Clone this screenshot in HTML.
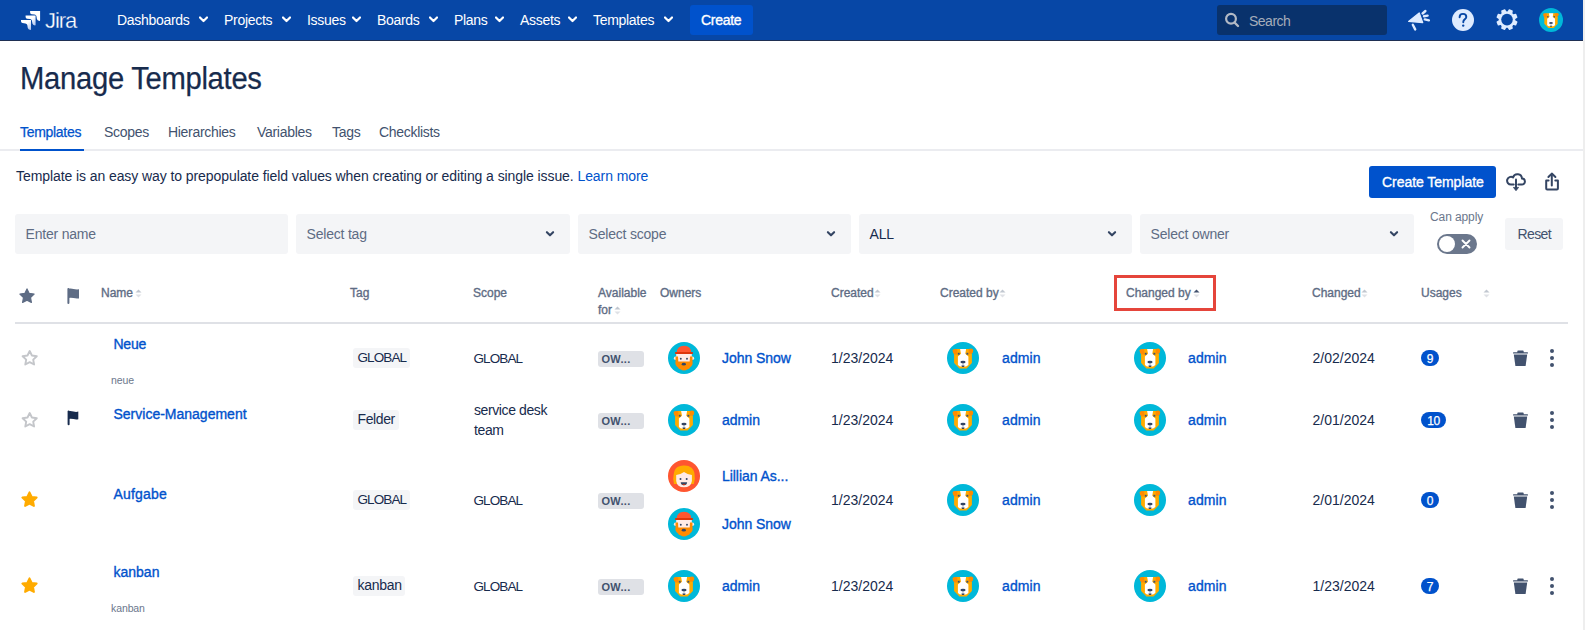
<!DOCTYPE html>
<html><head><meta charset="utf-8"><style>
html,body{margin:0;padding:0;background:#fff;width:1585px;height:630px;overflow:hidden;position:relative}
.t{position:absolute;white-space:nowrap;font-family:"Liberation Sans",sans-serif}
.r{position:absolute;display:block}
</style></head><body>
<div class="r" style="left:0px;top:0px;width:1583px;height:40px;background:#0747A6;border-radius:0px;"></div>
<div class="r" style="left:0px;top:40px;width:1583px;height:1px;background:#1F2F52;border-radius:0px;"></div>
<div class="r" style="left:1583px;top:0px;width:2px;height:630px;background:#EEEEEE;border-radius:0px;"></div>
<svg class="r" style="left:21px;top:6px" width="22" height="26" viewBox="0 0 22 26">
<defs><linearGradient id="lg" x1="0.2" y1="0.2" x2="1" y2="1"><stop offset="0.35" stop-color="#fff"/><stop offset="0.9" stop-color="#B4C8F0"/></linearGradient></defs>
<path id="wing" d="M0 0 H10 V9.2 Q10 10 9.3 9.9 Q7.2 9.6 6.8 8 L6.3 5 Q5.9 3.7 4.4 3.5 L1.5 3.1 Q0.1 2.8 0 1.3 Z" fill="#fff" transform="translate(9.1,5.1)"/>
<path d="M0 0 H10 V9.2 Q10 10 9.3 9.9 Q7.2 9.6 6.8 8 L6.3 5 Q5.9 3.7 4.4 3.5 L1.5 3.1 Q0.1 2.8 0 1.3 Z" fill="url(#lg)" transform="translate(4.6,9.6)"/>
<path d="M0 0 H10 V9.2 Q10 10 9.3 9.9 Q7.2 9.6 6.8 8 L6.3 5 Q5.9 3.7 4.4 3.5 L1.5 3.1 Q0.1 2.8 0 1.3 Z" fill="url(#lg)" transform="translate(0,14)"/>
</svg>
<div class="t" style="left:45px;top:10px;font-size:22px;line-height:22px;color:#FFFFFF;font-weight:400;letter-spacing:-1.1px;-webkit-text-stroke:0.3px #0747A6;">Jira</div>
<div class="t" style="left:117px;top:13px;font-size:14px;line-height:14px;color:#FFFFFF;font-weight:400;letter-spacing:-0.3px;">Dashboards</div>
<svg class="r" style="left:199px;top:16px" width="9" height="8" viewBox="0 0 9 8"><path d="M1 1.5 L4.5 5 L8 1.5" stroke="#fff" stroke-width="2.2" fill="none" stroke-linecap="round" stroke-linejoin="round"/></svg>
<div class="t" style="left:224px;top:13px;font-size:14px;line-height:14px;color:#FFFFFF;font-weight:400;letter-spacing:-0.3px;">Projects</div>
<svg class="r" style="left:282px;top:16px" width="9" height="8" viewBox="0 0 9 8"><path d="M1 1.5 L4.5 5 L8 1.5" stroke="#fff" stroke-width="2.2" fill="none" stroke-linecap="round" stroke-linejoin="round"/></svg>
<div class="t" style="left:307px;top:13px;font-size:14px;line-height:14px;color:#FFFFFF;font-weight:400;letter-spacing:-0.3px;">Issues</div>
<svg class="r" style="left:352px;top:16px" width="9" height="8" viewBox="0 0 9 8"><path d="M1 1.5 L4.5 5 L8 1.5" stroke="#fff" stroke-width="2.2" fill="none" stroke-linecap="round" stroke-linejoin="round"/></svg>
<div class="t" style="left:377px;top:13px;font-size:14px;line-height:14px;color:#FFFFFF;font-weight:400;letter-spacing:-0.3px;">Boards</div>
<svg class="r" style="left:429px;top:16px" width="9" height="8" viewBox="0 0 9 8"><path d="M1 1.5 L4.5 5 L8 1.5" stroke="#fff" stroke-width="2.2" fill="none" stroke-linecap="round" stroke-linejoin="round"/></svg>
<div class="t" style="left:454px;top:13px;font-size:14px;line-height:14px;color:#FFFFFF;font-weight:400;letter-spacing:-0.3px;">Plans</div>
<svg class="r" style="left:495px;top:16px" width="9" height="8" viewBox="0 0 9 8"><path d="M1 1.5 L4.5 5 L8 1.5" stroke="#fff" stroke-width="2.2" fill="none" stroke-linecap="round" stroke-linejoin="round"/></svg>
<div class="t" style="left:520px;top:13px;font-size:14px;line-height:14px;color:#FFFFFF;font-weight:400;letter-spacing:-0.3px;">Assets</div>
<svg class="r" style="left:568px;top:16px" width="9" height="8" viewBox="0 0 9 8"><path d="M1 1.5 L4.5 5 L8 1.5" stroke="#fff" stroke-width="2.2" fill="none" stroke-linecap="round" stroke-linejoin="round"/></svg>
<div class="t" style="left:593px;top:13px;font-size:14px;line-height:14px;color:#FFFFFF;font-weight:400;letter-spacing:-0.3px;">Templates</div>
<svg class="r" style="left:664px;top:16px" width="9" height="8" viewBox="0 0 9 8"><path d="M1 1.5 L4.5 5 L8 1.5" stroke="#fff" stroke-width="2.2" fill="none" stroke-linecap="round" stroke-linejoin="round"/></svg>
<div class="r" style="left:690px;top:5px;width:63px;height:30px;background:#0052CC;border-radius:3px;"></div>
<div class="t" style="left:701px;top:13px;font-size:14px;line-height:14px;color:#FFFFFF;font-weight:400;letter-spacing:-0.3px;-webkit-text-stroke:0.35px #FFFFFF;">Create</div>
<div class="r" style="left:1217px;top:5px;width:170px;height:30px;background:#09326C;border-radius:3px;"></div>
<svg class="r" style="left:1224px;top:12px" width="16" height="16" viewBox="0 0 16 16"><circle cx="7" cy="6.8" r="4.9" stroke="#B3BAC5" stroke-width="2.2" fill="none"/><path d="M10.5 10.5 L14 14" stroke="#B3BAC5" stroke-width="2.4" stroke-linecap="round"/></svg>
<div class="t" style="left:1249px;top:14px;font-size:14px;line-height:14px;color:#A5ADBA;font-weight:400;letter-spacing:-0.5px;">Search</div>
<svg class="r" style="left:1406px;top:9px" width="26" height="23" viewBox="0 0 26 23"><path d="M2.6 12.4 L13.2 3.9 L16.7 13.6 Z" fill="#DEEBFF" stroke="#DEEBFF" stroke-width="1.3" stroke-linejoin="round"/><path d="M6.8 15.8 L9.2 20.4" stroke="#DEEBFF" stroke-width="2.4" stroke-linecap="round"/><path d="M16.6 4.5 L19.4 2" stroke="#DEEBFF" stroke-width="2.4" stroke-linecap="round"/><path d="M18 7.3 L21.6 6.6" stroke="#DEEBFF" stroke-width="2.4" stroke-linecap="round"/><path d="M18.8 10.4 L22.9 11.3" stroke="#DEEBFF" stroke-width="2.4" stroke-linecap="round"/></svg>
<svg class="r" style="left:1451px;top:8px" width="24" height="24" viewBox="0 0 24 24"><circle cx="12" cy="12" r="11" fill="#DEEBFF"/><path d="M8.6 9.2 C8.6 7 10.2 5.9 12 5.9 C13.9 5.9 15.3 7.1 15.3 8.9 C15.3 11.2 12.3 11.4 12.3 13.8 V14.2" stroke="#0747A6" stroke-width="1.9" fill="none" stroke-linecap="round"/><circle cx="12.2" cy="17.6" r="1.2" fill="#0747A6"/></svg>
<svg class="r" style="left:1496px;top:9px" width="22" height="22" viewBox="0 0 22 22"><g transform="translate(11,10.6)"><path d="M-2.7 -7 L-2.1 -10.2 Q-2 -10.6 -1.6 -10.6 H1.6 Q2 -10.6 2.1 -10.2 L2.7 -7 Z" transform="rotate(22.5)" fill="#DEEBFF"/><path d="M-2.7 -7 L-2.1 -10.2 Q-2 -10.6 -1.6 -10.6 H1.6 Q2 -10.6 2.1 -10.2 L2.7 -7 Z" transform="rotate(67.5)" fill="#DEEBFF"/><path d="M-2.7 -7 L-2.1 -10.2 Q-2 -10.6 -1.6 -10.6 H1.6 Q2 -10.6 2.1 -10.2 L2.7 -7 Z" transform="rotate(112.5)" fill="#DEEBFF"/><path d="M-2.7 -7 L-2.1 -10.2 Q-2 -10.6 -1.6 -10.6 H1.6 Q2 -10.6 2.1 -10.2 L2.7 -7 Z" transform="rotate(157.5)" fill="#DEEBFF"/><path d="M-2.7 -7 L-2.1 -10.2 Q-2 -10.6 -1.6 -10.6 H1.6 Q2 -10.6 2.1 -10.2 L2.7 -7 Z" transform="rotate(202.5)" fill="#DEEBFF"/><path d="M-2.7 -7 L-2.1 -10.2 Q-2 -10.6 -1.6 -10.6 H1.6 Q2 -10.6 2.1 -10.2 L2.7 -7 Z" transform="rotate(247.5)" fill="#DEEBFF"/><path d="M-2.7 -7 L-2.1 -10.2 Q-2 -10.6 -1.6 -10.6 H1.6 Q2 -10.6 2.1 -10.2 L2.7 -7 Z" transform="rotate(292.5)" fill="#DEEBFF"/><path d="M-2.7 -7 L-2.1 -10.2 Q-2 -10.6 -1.6 -10.6 H1.6 Q2 -10.6 2.1 -10.2 L2.7 -7 Z" transform="rotate(337.5)" fill="#DEEBFF"/><circle r="8.2" fill="#DEEBFF"/><circle r="5.8" fill="#0747A6"/></g></svg>
<div class="r" style="left:1539px;top:8px;width:24px;height:24px"><svg width="24" height="24" viewBox="0 0 32 32"><circle cx="16" cy="16" r="16" fill="#00B8D9"/>
<path d="M7.1 12.3 L8.9 7.1 H22.6 L24.9 12.3 V20.9 L19.6 26.6 H12.4 L7.1 20.9 Z" fill="#FFAB00"/>
<path d="M5.6 8.6 Q5.8 6.9 7.6 6.9 L10.3 7.2 L10.3 12.6 L7.6 12.6 Q5.6 11.5 5.6 8.6 Z" fill="#FF8B00"/>
<path d="M26.2 8.4 Q26 6.6 24.2 6.6 L21.7 7 L21.7 11.8 L24.3 11.8 Q26.2 10.9 26.2 8.4 Z" fill="#FF8B00"/>
<path d="M13.1 7.1 H19.1 L18.3 11.7 L21.4 14.4 V23.1 L19.1 24.4 H12.9 L10.9 23.1 V14.4 L14 11.7 Z" fill="#FFFFFF"/>
<rect x="10.8" y="10.8" width="1.9" height="1.9" fill="#42526E"/><rect x="19.4" y="10.8" width="1.9" height="1.9" fill="#42526E"/>
<ellipse cx="16" cy="20.1" rx="2.6" ry="1.35" fill="#344563"/><rect x="15.6" y="21" width="0.8" height="2.8" fill="#97A0AF"/><path d="M14.4 23.6 H17.6 L17 24.9 H15 Z" fill="#344563"/>
</svg></div>
<div class="t" style="left:20px;top:63px;font-size:31px;line-height:31px;color:#172B4D;font-weight:400;letter-spacing:-0.3px;transform:scaleX(0.942);transform-origin:0 0;-webkit-text-stroke:0.25px #172B4D;">Manage Templates</div>
<div class="t" style="left:20px;top:125px;font-size:14px;line-height:14px;color:#0052CC;font-weight:400;letter-spacing:-0.3px;-webkit-text-stroke:0.25px #0052CC;">Templates</div>
<div class="t" style="left:104px;top:125px;font-size:14px;line-height:14px;color:#42526E;font-weight:400;letter-spacing:-0.3px;">Scopes</div>
<div class="t" style="left:168px;top:125px;font-size:14px;line-height:14px;color:#42526E;font-weight:400;letter-spacing:-0.3px;">Hierarchies</div>
<div class="t" style="left:257px;top:125px;font-size:14px;line-height:14px;color:#42526E;font-weight:400;letter-spacing:-0.3px;">Variables</div>
<div class="t" style="left:332px;top:125px;font-size:14px;line-height:14px;color:#42526E;font-weight:400;letter-spacing:-0.3px;">Tags</div>
<div class="t" style="left:379px;top:125px;font-size:14px;line-height:14px;color:#42526E;font-weight:400;letter-spacing:-0.3px;">Checklists</div>
<div class="r" style="left:0px;top:149px;width:1583px;height:2px;background:#EBECF0;border-radius:0px;"></div>
<div class="r" style="left:20px;top:149px;width:64px;height:2px;background:#0052CC;border-radius:0px;"></div>
<div class="t" style="left:16px;top:169px;font-size:14px;line-height:14px;color:#172B4D;font-weight:400;letter-spacing:-0.08px;">Template is an easy way to prepopulate field values when creating or editing a single issue. <span style="color:#0052CC">Learn more</span></div>
<div class="r" style="left:1369px;top:166px;width:127px;height:32px;background:#0052CC;border-radius:3px;"></div>
<div class="t" style="left:1382px;top:175px;font-size:14px;line-height:14px;color:#FFFFFF;font-weight:400;letter-spacing:-0.05px;-webkit-text-stroke:0.35px #FFFFFF;">Create Template</div>
<svg class="r" style="left:1504px;top:170px" width="24" height="24" viewBox="0 0 24 24"><path d="M9.7 14.6 H7 A3.9 3.9 0 1 1 9.07 7.39 A4.6 4.6 0 0 1 18 8.6 A3 3 0 0 1 17.8 14.6 H14.3" stroke="#344563" stroke-width="2" fill="none" stroke-linecap="round" stroke-linejoin="round"/><path d="M12 9.4 V18" stroke="#344563" stroke-width="2" stroke-linecap="round"/><path d="M9.4 17.4 H14.6 L12 20.7 Z" fill="#344563" stroke="#344563" stroke-width="0.8" stroke-linejoin="round"/></svg>
<svg class="r" style="left:1542px;top:170px" width="20" height="24" viewBox="0 0 20 24"><path d="M6.6 10.5 H4.2 V18.6 Q4.2 19.6 5.2 19.6 H14.9 Q15.9 19.6 15.9 18.6 V10.5 H13.3" stroke="#344563" stroke-width="2" fill="none" stroke-linecap="round" stroke-linejoin="round"/><path d="M9.8 4.5 V15.6" stroke="#344563" stroke-width="2" stroke-linecap="round"/><path d="M6.4 7 L9.8 3.6 L13.4 7" stroke="#344563" stroke-width="2" fill="none" stroke-linecap="round" stroke-linejoin="round"/></svg>
<div class="r" style="left:15px;top:214px;width:273px;height:40px;background:#F4F5F7;border-radius:3px;"></div>
<div class="t" style="left:25.5px;top:227px;font-size:14px;line-height:14px;color:#5E6C84;font-weight:400;letter-spacing:-0.2px;">Enter name</div>
<div class="r" style="left:296px;top:214px;width:274px;height:40px;background:#F4F5F7;border-radius:3px;"></div>
<div class="t" style="left:306.5px;top:227px;font-size:14px;line-height:14px;color:#5E6C84;font-weight:400;letter-spacing:-0.2px;">Select tag</div>
<svg class="r" style="left:545px;top:229px" width="10" height="10" viewBox="0 0 10 10"><path d="M1.9 3.2 L5 6.3 L8.1 3.2" stroke="#344563" stroke-width="2.1" fill="none" stroke-linecap="round" stroke-linejoin="round"/></svg>
<div class="r" style="left:578px;top:214px;width:273px;height:40px;background:#F4F5F7;border-radius:3px;"></div>
<div class="t" style="left:588.5px;top:227px;font-size:14px;line-height:14px;color:#5E6C84;font-weight:400;letter-spacing:-0.2px;">Select scope</div>
<svg class="r" style="left:826px;top:229px" width="10" height="10" viewBox="0 0 10 10"><path d="M1.9 3.2 L5 6.3 L8.1 3.2" stroke="#344563" stroke-width="2.1" fill="none" stroke-linecap="round" stroke-linejoin="round"/></svg>
<div class="r" style="left:859px;top:214px;width:273px;height:40px;background:#F4F5F7;border-radius:3px;"></div>
<div class="t" style="left:869.5px;top:227px;font-size:14px;line-height:14px;color:#172B4D;font-weight:400;letter-spacing:-0.2px;">ALL</div>
<svg class="r" style="left:1107px;top:229px" width="10" height="10" viewBox="0 0 10 10"><path d="M1.9 3.2 L5 6.3 L8.1 3.2" stroke="#344563" stroke-width="2.1" fill="none" stroke-linecap="round" stroke-linejoin="round"/></svg>
<div class="r" style="left:1140px;top:214px;width:274px;height:40px;background:#F4F5F7;border-radius:3px;"></div>
<div class="t" style="left:1150.5px;top:227px;font-size:14px;line-height:14px;color:#5E6C84;font-weight:400;letter-spacing:-0.2px;">Select owner</div>
<svg class="r" style="left:1389px;top:229px" width="10" height="10" viewBox="0 0 10 10"><path d="M1.9 3.2 L5 6.3 L8.1 3.2" stroke="#344563" stroke-width="2.1" fill="none" stroke-linecap="round" stroke-linejoin="round"/></svg>
<div class="t" style="left:1430px;top:211px;font-size:12px;line-height:12px;color:#6B778C;font-weight:400;letter-spacing:-0.1px;">Can apply</div>
<div class="r" style="left:1437px;top:234px;width:40px;height:20px;background:#6B778C;border-radius:10px;"></div>
<div class="r" style="left:1439px;top:236px;width:16px;height:16px;background:#FFFFFF;border-radius:8px;"></div>
<svg class="r" style="left:1460px;top:238px" width="12" height="12" viewBox="0 0 12 12"><path d="M2.5 2.5 L9.5 9.5 M9.5 2.5 L2.5 9.5" stroke="#fff" stroke-width="1.9" stroke-linecap="round"/></svg>
<div class="r" style="left:1505px;top:218px;width:58px;height:32px;background:#F4F5F7;border-radius:3px;"></div>
<div class="t" style="left:1517.5px;top:227px;font-size:14px;line-height:14px;color:#42526E;font-weight:400;letter-spacing:-0.6px;">Reset</div>
<svg class="r" style="left:19px;top:288px" width="16" height="16" viewBox="0 0 16 16"><path d="M8 0.9 L10.2 5.4 L15.1 6.1 L11.5 9.5 L12.4 14.4 L8 12.1 L3.6 14.4 L4.5 9.5 L0.9 6.1 L5.8 5.4 Z" fill="#5E6C84" stroke="#5E6C84" stroke-width="1.2" stroke-linejoin="round"/></svg>
<svg class="r" style="left:66px;top:287px" width="14" height="17" viewBox="0 0 14 17"><path d="M2.4 2 V16" stroke="#5E6C84" stroke-width="2" stroke-linecap="round"/><path d="M2.2 1.8 Q5 1.2 7.5 2 Q10 2.6 13 2.3 V11.4 Q10.2 11.8 7.5 11.1 Q5 10.5 2.2 11 Z" fill="#5E6C84"/></svg>
<div class="t" style="left:101px;top:287px;font-size:12px;line-height:12px;color:#5E6C84;font-weight:400;letter-spacing:0px;-webkit-text-stroke:0.35px #5E6C84;">Name</div>
<div class="t" style="left:350px;top:287px;font-size:12px;line-height:12px;color:#5E6C84;font-weight:400;letter-spacing:0px;-webkit-text-stroke:0.35px #5E6C84;">Tag</div>
<div class="t" style="left:473px;top:287px;font-size:12px;line-height:12px;color:#5E6C84;font-weight:400;letter-spacing:0px;-webkit-text-stroke:0.35px #5E6C84;">Scope</div>
<div class="t" style="left:598px;top:287px;font-size:12px;line-height:12px;color:#5E6C84;font-weight:400;letter-spacing:0px;-webkit-text-stroke:0.35px #5E6C84;">Available</div>
<div class="t" style="left:660px;top:287px;font-size:12px;line-height:12px;color:#5E6C84;font-weight:400;letter-spacing:0px;-webkit-text-stroke:0.35px #5E6C84;">Owners</div>
<div class="t" style="left:831px;top:287px;font-size:12px;line-height:12px;color:#5E6C84;font-weight:400;letter-spacing:0px;-webkit-text-stroke:0.35px #5E6C84;">Created</div>
<div class="t" style="left:940px;top:287px;font-size:12px;line-height:12px;color:#5E6C84;font-weight:400;letter-spacing:0px;-webkit-text-stroke:0.35px #5E6C84;">Created by</div>
<div class="t" style="left:1126px;top:287px;font-size:12px;line-height:12px;color:#5E6C84;font-weight:400;letter-spacing:0px;-webkit-text-stroke:0.35px #5E6C84;">Changed by</div>
<div class="t" style="left:1312px;top:287px;font-size:12px;line-height:12px;color:#5E6C84;font-weight:400;letter-spacing:0px;-webkit-text-stroke:0.35px #5E6C84;">Changed</div>
<div class="t" style="left:1421px;top:287px;font-size:12px;line-height:12px;color:#5E6C84;font-weight:400;letter-spacing:0px;-webkit-text-stroke:0.35px #5E6C84;">Usages</div>
<div class="t" style="left:598px;top:304px;font-size:12px;line-height:12px;color:#5E6C84;font-weight:400;letter-spacing:0px;-webkit-text-stroke:0.35px #5E6C84;">for</div>
<svg class="r" style="left:135px;top:289px" width="7" height="9" viewBox="0 0 7 9"><path d="M0.5 3.5 L3.5 0.5 L6.5 3.5 Z" fill="#C1C7D0"/><path d="M0.5 5.5 L3.5 8.5 L6.5 5.5 Z" fill="#DFE1E6"/></svg>
<svg class="r" style="left:614px;top:306px" width="7" height="9" viewBox="0 0 7 9"><path d="M0.5 3.5 L3.5 0.5 L6.5 3.5 Z" fill="#C1C7D0"/><path d="M0.5 5.5 L3.5 8.5 L6.5 5.5 Z" fill="#DFE1E6"/></svg>
<svg class="r" style="left:874px;top:289px" width="7" height="9" viewBox="0 0 7 9"><path d="M0.5 3.5 L3.5 0.5 L6.5 3.5 Z" fill="#C1C7D0"/><path d="M0.5 5.5 L3.5 8.5 L6.5 5.5 Z" fill="#DFE1E6"/></svg>
<svg class="r" style="left:999px;top:289px" width="7" height="9" viewBox="0 0 7 9"><path d="M0.5 3.5 L3.5 0.5 L6.5 3.5 Z" fill="#C1C7D0"/><path d="M0.5 5.5 L3.5 8.5 L6.5 5.5 Z" fill="#DFE1E6"/></svg>
<svg class="r" style="left:1193px;top:289px" width="7" height="9" viewBox="0 0 7 9"><path d="M0.5 3.5 L3.5 0.5 L6.5 3.5 Z" fill="#42526E"/><path d="M0.5 5.5 L3.5 8.5 L6.5 5.5 Z" fill="#DFE1E6"/></svg>
<svg class="r" style="left:1361px;top:289px" width="7" height="9" viewBox="0 0 7 9"><path d="M0.5 3.5 L3.5 0.5 L6.5 3.5 Z" fill="#C1C7D0"/><path d="M0.5 5.5 L3.5 8.5 L6.5 5.5 Z" fill="#DFE1E6"/></svg>
<svg class="r" style="left:1483px;top:289px" width="7" height="9" viewBox="0 0 7 9"><path d="M0.5 3.5 L3.5 0.5 L6.5 3.5 Z" fill="#C1C7D0"/><path d="M0.5 5.5 L3.5 8.5 L6.5 5.5 Z" fill="#DFE1E6"/></svg>
<div class="r" style="left:1114px;top:275px;width:102px;height:36px;background:transparent;border-radius:0px;border:3px solid #E5453B;box-sizing:border-box;"></div>
<div class="r" style="left:15px;top:322px;width:1553px;height:2px;background:#DFE1E6;border-radius:0px;"></div>
<svg class="r" style="left:21px;top:349px" width="18" height="18" viewBox="0 0 18 18"><g transform="translate(0.7,1.1)"><path d="M8 0.9 L10.2 5.4 L15.1 6.1 L11.5 9.5 L12.4 14.4 L8 12.1 L3.6 14.4 L4.5 9.5 L0.9 6.1 L5.8 5.4 Z" fill="none" stroke="#C4C6CA" stroke-width="1.9" stroke-linejoin="round"/></g></svg>
<div class="t" style="left:113.5px;top:337px;font-size:14px;line-height:14px;color:#0052CC;font-weight:400;letter-spacing:-0.25px;-webkit-text-stroke:0.35px #0052CC;">Neue</div>
<div class="t" style="left:111px;top:375px;font-size:10.5px;line-height:10.5px;color:#6B778C;font-weight:400;letter-spacing:-0.1px;">neue</div>
<div class="r" style="left:353px;top:348px;width:57px;height:20px;background:#F4F5F7;border-radius:3px;"></div>
<div class="t" style="left:357.5px;top:351px;font-size:13.5px;line-height:13.5px;color:#172B4D;font-weight:400;letter-spacing:-0.9px;">GLOBAL</div>
<div class="t" style="left:473.5px;top:352px;font-size:13.5px;line-height:13.5px;color:#172B4D;font-weight:400;letter-spacing:-0.9px;">GLOBAL</div>
<div class="r" style="left:598px;top:351px;width:46px;height:16px;background:#DFE1E6;border-radius:3px;"></div>
<div class="t" style="left:601.5px;top:354px;font-size:11px;line-height:11px;color:#42526E;font-weight:700;letter-spacing:0.3px;">OW...</div>
<div class="r" style="left:668px;top:342px;width:32px;height:32px"><svg width="32" height="32" viewBox="0 0 32 32"><circle cx="16" cy="16" r="16" fill="#00B8D9"/>
<ellipse cx="7.3" cy="16.2" rx="1.4" ry="1.8" fill="#FFEBE6"/><ellipse cx="24.7" cy="16.2" rx="1.4" ry="1.8" fill="#FFEBE6"/>
<rect x="8.2" y="11" width="15.6" height="9" fill="#FFEBE6"/>
<path d="M7.6 14.5 L10 14.5 L10.3 19.5 L21.7 19.5 L22 14.5 L24.4 14.5 L24.6 22 Q23.5 25 22 25.5 Q21.3 27.5 19.5 27.3 Q17.8 28.8 16 28.3 Q14.2 28.8 12.5 27.3 Q10.7 27.5 10 25.5 Q8.5 25 7.4 22 Z" fill="#FF8B00"/>
<path d="M8.8 10.5 Q9 3.8 16 3.8 Q23 3.8 23.2 10.5 Z" fill="#FF5630"/>
<rect x="7" y="10" width="18" height="2" rx="0.8" fill="#DE350B"/>
<circle cx="12.8" cy="16.8" r="0.95" fill="#344563"/><circle cx="19" cy="16.8" r="0.95" fill="#344563"/>
<ellipse cx="15.8" cy="22.2" rx="2.1" ry="1.4" fill="#344563"/>
</svg></div>
<div class="t" style="left:722px;top:351px;font-size:14px;line-height:14px;color:#0052CC;font-weight:400;letter-spacing:-0.05px;-webkit-text-stroke:0.35px #0052CC;">John Snow</div>
<div class="t" style="left:831px;top:351px;font-size:14px;line-height:14px;color:#172B4D;font-weight:400;letter-spacing:0px;">1/23/2024</div>
<div class="r" style="left:947px;top:342px;width:32px;height:32px"><svg width="32" height="32" viewBox="0 0 32 32"><circle cx="16" cy="16" r="16" fill="#00B8D9"/>
<path d="M7.1 12.3 L8.9 7.1 H22.6 L24.9 12.3 V20.9 L19.6 26.6 H12.4 L7.1 20.9 Z" fill="#FFAB00"/>
<path d="M5.6 8.6 Q5.8 6.9 7.6 6.9 L10.3 7.2 L10.3 12.6 L7.6 12.6 Q5.6 11.5 5.6 8.6 Z" fill="#FF8B00"/>
<path d="M26.2 8.4 Q26 6.6 24.2 6.6 L21.7 7 L21.7 11.8 L24.3 11.8 Q26.2 10.9 26.2 8.4 Z" fill="#FF8B00"/>
<path d="M13.1 7.1 H19.1 L18.3 11.7 L21.4 14.4 V23.1 L19.1 24.4 H12.9 L10.9 23.1 V14.4 L14 11.7 Z" fill="#FFFFFF"/>
<rect x="10.8" y="10.8" width="1.9" height="1.9" fill="#42526E"/><rect x="19.4" y="10.8" width="1.9" height="1.9" fill="#42526E"/>
<ellipse cx="16" cy="20.1" rx="2.6" ry="1.35" fill="#344563"/><rect x="15.6" y="21" width="0.8" height="2.8" fill="#97A0AF"/><path d="M14.4 23.6 H17.6 L17 24.9 H15 Z" fill="#344563"/>
</svg></div>
<div class="t" style="left:1002px;top:351px;font-size:14px;line-height:14px;color:#0052CC;font-weight:400;letter-spacing:0.1px;-webkit-text-stroke:0.35px #0052CC;">admin</div>
<div class="r" style="left:1134px;top:342px;width:32px;height:32px"><svg width="32" height="32" viewBox="0 0 32 32"><circle cx="16" cy="16" r="16" fill="#00B8D9"/>
<path d="M7.1 12.3 L8.9 7.1 H22.6 L24.9 12.3 V20.9 L19.6 26.6 H12.4 L7.1 20.9 Z" fill="#FFAB00"/>
<path d="M5.6 8.6 Q5.8 6.9 7.6 6.9 L10.3 7.2 L10.3 12.6 L7.6 12.6 Q5.6 11.5 5.6 8.6 Z" fill="#FF8B00"/>
<path d="M26.2 8.4 Q26 6.6 24.2 6.6 L21.7 7 L21.7 11.8 L24.3 11.8 Q26.2 10.9 26.2 8.4 Z" fill="#FF8B00"/>
<path d="M13.1 7.1 H19.1 L18.3 11.7 L21.4 14.4 V23.1 L19.1 24.4 H12.9 L10.9 23.1 V14.4 L14 11.7 Z" fill="#FFFFFF"/>
<rect x="10.8" y="10.8" width="1.9" height="1.9" fill="#42526E"/><rect x="19.4" y="10.8" width="1.9" height="1.9" fill="#42526E"/>
<ellipse cx="16" cy="20.1" rx="2.6" ry="1.35" fill="#344563"/><rect x="15.6" y="21" width="0.8" height="2.8" fill="#97A0AF"/><path d="M14.4 23.6 H17.6 L17 24.9 H15 Z" fill="#344563"/>
</svg></div>
<div class="t" style="left:1188px;top:351px;font-size:14px;line-height:14px;color:#0052CC;font-weight:400;letter-spacing:0.1px;-webkit-text-stroke:0.35px #0052CC;">admin</div>
<div class="t" style="left:1312.5px;top:351px;font-size:14px;line-height:14px;color:#172B4D;font-weight:400;letter-spacing:0px;">2/02/2024</div>
<div class="r" style="left:1421px;top:350px;width:18px;height:16px;background:#0052CC;border-radius:8px;"></div>
<div class="t" style="left:1421px;top:352.5px;font-size:12px;line-height:12px;color:#FFFFFF;font-weight:400;letter-spacing:-0.3px;-webkit-text-stroke:0.25px #FFFFFF;"><span style="display:inline-block;width:18px;text-align:center">9</span></div>
<svg class="r" style="left:1512px;top:350px" width="17" height="17" viewBox="0 0 17 17"><path d="M1 2.8 Q1 2.2 1.6 2.2 H5.3 V1.4 Q5.3 0.6 6.1 0.6 H10.9 Q11.7 0.6 11.7 1.4 V2.2 H15.4 Q16 2.2 16 2.8 V3.4 H1 Z" fill="#42526E"/><path d="M1.8 4.6 H15.2 L13.6 16 H3.4 Z" fill="#42526E"/></svg>
<svg class="r" style="left:1548px;top:348px" width="8" height="20" viewBox="0 0 8 20"><circle cx="4" cy="3" r="2" fill="#42526E"/><circle cx="4" cy="10" r="2" fill="#42526E"/><circle cx="4" cy="17" r="2" fill="#42526E"/></svg>
<svg class="r" style="left:21px;top:411px" width="18" height="18" viewBox="0 0 18 18"><g transform="translate(0.7,1.1)"><path d="M8 0.9 L10.2 5.4 L15.1 6.1 L11.5 9.5 L12.4 14.4 L8 12.1 L3.6 14.4 L4.5 9.5 L0.9 6.1 L5.8 5.4 Z" fill="none" stroke="#C4C6CA" stroke-width="1.9" stroke-linejoin="round"/></g></svg>
<svg class="r" style="left:67px;top:410px" width="13" height="16" viewBox="0 0 13 16"><path d="M1.6 1.5 V14.3" stroke="#172B4D" stroke-width="2" stroke-linecap="round"/><path d="M1 1.2 Q4 0.6 6.5 1.5 Q9 2.2 11.3 1.6 V9.3 Q9 9.9 6.5 9.1 Q4 8.4 1 9 Z" fill="#172B4D"/></svg>
<div class="t" style="left:113.5px;top:407px;font-size:14px;line-height:14px;color:#0052CC;font-weight:400;letter-spacing:0px;-webkit-text-stroke:0.35px #0052CC;">Service-Management</div>
<div class="r" style="left:353px;top:410px;width:46px;height:20px;background:#F4F5F7;border-radius:3px;"></div>
<div class="t" style="left:357.5px;top:412px;font-size:14px;line-height:14px;color:#172B4D;font-weight:400;letter-spacing:-0.4px;">Felder</div>
<div class="t" style="left:474px;top:403px;font-size:14px;line-height:14px;color:#172B4D;font-weight:400;letter-spacing:-0.4px;">service desk</div>
<div class="t" style="left:474px;top:423px;font-size:14px;line-height:14px;color:#172B4D;font-weight:400;letter-spacing:-0.4px;">team</div>
<div class="r" style="left:598px;top:413px;width:46px;height:16px;background:#DFE1E6;border-radius:3px;"></div>
<div class="t" style="left:601.5px;top:416px;font-size:11px;line-height:11px;color:#42526E;font-weight:700;letter-spacing:0.3px;">OW...</div>
<div class="r" style="left:668px;top:404px;width:32px;height:32px"><svg width="32" height="32" viewBox="0 0 32 32"><circle cx="16" cy="16" r="16" fill="#00B8D9"/>
<path d="M7.1 12.3 L8.9 7.1 H22.6 L24.9 12.3 V20.9 L19.6 26.6 H12.4 L7.1 20.9 Z" fill="#FFAB00"/>
<path d="M5.6 8.6 Q5.8 6.9 7.6 6.9 L10.3 7.2 L10.3 12.6 L7.6 12.6 Q5.6 11.5 5.6 8.6 Z" fill="#FF8B00"/>
<path d="M26.2 8.4 Q26 6.6 24.2 6.6 L21.7 7 L21.7 11.8 L24.3 11.8 Q26.2 10.9 26.2 8.4 Z" fill="#FF8B00"/>
<path d="M13.1 7.1 H19.1 L18.3 11.7 L21.4 14.4 V23.1 L19.1 24.4 H12.9 L10.9 23.1 V14.4 L14 11.7 Z" fill="#FFFFFF"/>
<rect x="10.8" y="10.8" width="1.9" height="1.9" fill="#42526E"/><rect x="19.4" y="10.8" width="1.9" height="1.9" fill="#42526E"/>
<ellipse cx="16" cy="20.1" rx="2.6" ry="1.35" fill="#344563"/><rect x="15.6" y="21" width="0.8" height="2.8" fill="#97A0AF"/><path d="M14.4 23.6 H17.6 L17 24.9 H15 Z" fill="#344563"/>
</svg></div>
<div class="t" style="left:722px;top:413px;font-size:14px;line-height:14px;color:#0052CC;font-weight:400;letter-spacing:-0.05px;-webkit-text-stroke:0.35px #0052CC;">admin</div>
<div class="t" style="left:831px;top:413px;font-size:14px;line-height:14px;color:#172B4D;font-weight:400;letter-spacing:0px;">1/23/2024</div>
<div class="r" style="left:947px;top:404px;width:32px;height:32px"><svg width="32" height="32" viewBox="0 0 32 32"><circle cx="16" cy="16" r="16" fill="#00B8D9"/>
<path d="M7.1 12.3 L8.9 7.1 H22.6 L24.9 12.3 V20.9 L19.6 26.6 H12.4 L7.1 20.9 Z" fill="#FFAB00"/>
<path d="M5.6 8.6 Q5.8 6.9 7.6 6.9 L10.3 7.2 L10.3 12.6 L7.6 12.6 Q5.6 11.5 5.6 8.6 Z" fill="#FF8B00"/>
<path d="M26.2 8.4 Q26 6.6 24.2 6.6 L21.7 7 L21.7 11.8 L24.3 11.8 Q26.2 10.9 26.2 8.4 Z" fill="#FF8B00"/>
<path d="M13.1 7.1 H19.1 L18.3 11.7 L21.4 14.4 V23.1 L19.1 24.4 H12.9 L10.9 23.1 V14.4 L14 11.7 Z" fill="#FFFFFF"/>
<rect x="10.8" y="10.8" width="1.9" height="1.9" fill="#42526E"/><rect x="19.4" y="10.8" width="1.9" height="1.9" fill="#42526E"/>
<ellipse cx="16" cy="20.1" rx="2.6" ry="1.35" fill="#344563"/><rect x="15.6" y="21" width="0.8" height="2.8" fill="#97A0AF"/><path d="M14.4 23.6 H17.6 L17 24.9 H15 Z" fill="#344563"/>
</svg></div>
<div class="t" style="left:1002px;top:413px;font-size:14px;line-height:14px;color:#0052CC;font-weight:400;letter-spacing:0.1px;-webkit-text-stroke:0.35px #0052CC;">admin</div>
<div class="r" style="left:1134px;top:404px;width:32px;height:32px"><svg width="32" height="32" viewBox="0 0 32 32"><circle cx="16" cy="16" r="16" fill="#00B8D9"/>
<path d="M7.1 12.3 L8.9 7.1 H22.6 L24.9 12.3 V20.9 L19.6 26.6 H12.4 L7.1 20.9 Z" fill="#FFAB00"/>
<path d="M5.6 8.6 Q5.8 6.9 7.6 6.9 L10.3 7.2 L10.3 12.6 L7.6 12.6 Q5.6 11.5 5.6 8.6 Z" fill="#FF8B00"/>
<path d="M26.2 8.4 Q26 6.6 24.2 6.6 L21.7 7 L21.7 11.8 L24.3 11.8 Q26.2 10.9 26.2 8.4 Z" fill="#FF8B00"/>
<path d="M13.1 7.1 H19.1 L18.3 11.7 L21.4 14.4 V23.1 L19.1 24.4 H12.9 L10.9 23.1 V14.4 L14 11.7 Z" fill="#FFFFFF"/>
<rect x="10.8" y="10.8" width="1.9" height="1.9" fill="#42526E"/><rect x="19.4" y="10.8" width="1.9" height="1.9" fill="#42526E"/>
<ellipse cx="16" cy="20.1" rx="2.6" ry="1.35" fill="#344563"/><rect x="15.6" y="21" width="0.8" height="2.8" fill="#97A0AF"/><path d="M14.4 23.6 H17.6 L17 24.9 H15 Z" fill="#344563"/>
</svg></div>
<div class="t" style="left:1188px;top:413px;font-size:14px;line-height:14px;color:#0052CC;font-weight:400;letter-spacing:0.1px;-webkit-text-stroke:0.35px #0052CC;">admin</div>
<div class="t" style="left:1312.5px;top:413px;font-size:14px;line-height:14px;color:#172B4D;font-weight:400;letter-spacing:0px;">2/01/2024</div>
<div class="r" style="left:1421px;top:412px;width:25px;height:16px;background:#0052CC;border-radius:8px;"></div>
<div class="t" style="left:1421px;top:414.5px;font-size:12px;line-height:12px;color:#FFFFFF;font-weight:400;letter-spacing:-0.3px;-webkit-text-stroke:0.25px #FFFFFF;"><span style="display:inline-block;width:25px;text-align:center">10</span></div>
<svg class="r" style="left:1512px;top:412px" width="17" height="17" viewBox="0 0 17 17"><path d="M1 2.8 Q1 2.2 1.6 2.2 H5.3 V1.4 Q5.3 0.6 6.1 0.6 H10.9 Q11.7 0.6 11.7 1.4 V2.2 H15.4 Q16 2.2 16 2.8 V3.4 H1 Z" fill="#42526E"/><path d="M1.8 4.6 H15.2 L13.6 16 H3.4 Z" fill="#42526E"/></svg>
<svg class="r" style="left:1548px;top:410px" width="8" height="20" viewBox="0 0 8 20"><circle cx="4" cy="3" r="2" fill="#42526E"/><circle cx="4" cy="10" r="2" fill="#42526E"/><circle cx="4" cy="17" r="2" fill="#42526E"/></svg>
<svg class="r" style="left:21px;top:491px" width="17" height="17" viewBox="0 0 17 17"><g transform="translate(0.5,0.5)"><path d="M8 0.9 L10.2 5.4 L15.1 6.1 L11.5 9.5 L12.4 14.4 L8 12.1 L3.6 14.4 L4.5 9.5 L0.9 6.1 L5.8 5.4 Z" fill="#FFAB00" stroke="#FFAB00" stroke-width="2" stroke-linejoin="round"/></g></svg>
<div class="t" style="left:113.5px;top:487px;font-size:14px;line-height:14px;color:#0052CC;font-weight:400;letter-spacing:0.2px;-webkit-text-stroke:0.35px #0052CC;">Aufgabe</div>
<div class="r" style="left:353px;top:490px;width:57px;height:20px;background:#F4F5F7;border-radius:3px;"></div>
<div class="t" style="left:357.5px;top:493px;font-size:13.5px;line-height:13.5px;color:#172B4D;font-weight:400;letter-spacing:-0.9px;">GLOBAL</div>
<div class="t" style="left:473.5px;top:494px;font-size:13.5px;line-height:13.5px;color:#172B4D;font-weight:400;letter-spacing:-0.9px;">GLOBAL</div>
<div class="r" style="left:598px;top:493px;width:46px;height:16px;background:#DFE1E6;border-radius:3px;"></div>
<div class="t" style="left:601.5px;top:496px;font-size:11px;line-height:11px;color:#42526E;font-weight:700;letter-spacing:0.3px;">OW...</div>
<div class="r" style="left:668px;top:460px;width:32px;height:32px"><svg width="32" height="32" viewBox="0 0 32 32"><circle cx="16" cy="16" r="16" fill="#FF5630"/>
<path d="M6 24 Q4.6 19 5.6 15 Q6.2 9 9.5 7 Q12.5 5.3 16 5.5 Q20.5 5.3 23.5 7.8 Q26.5 10.5 26.6 15 Q27.5 19 25.8 24 Z" fill="#FFAB00"/>
<path d="M8.2 15 Q12.5 14.6 16 12 Q19.5 14.6 23.9 15 L23.9 21 Q23 27.3 16 27.3 Q9 27.3 8.2 21 Z" fill="#FFEBE6"/>
<circle cx="12.5" cy="18.9" r="1" fill="#344563"/><circle cx="18.7" cy="18.9" r="1" fill="#344563"/>
<path d="M12.7 22.3 H19.1 Q19 25.3 15.9 25.3 Q12.8 25.3 12.7 22.3 Z" fill="#344563"/>
<path d="M14.2 24.4 Q15.9 23.4 17.6 24.4 Q16.9 25.2 15.9 25.2 Q14.9 25.2 14.2 24.4 Z" fill="#DE350B"/>
</svg></div>
<div class="t" style="left:722px;top:469px;font-size:14px;line-height:14px;color:#0052CC;font-weight:400;letter-spacing:-0.05px;-webkit-text-stroke:0.35px #0052CC;">Lillian As...</div>
<div class="r" style="left:668px;top:508px;width:32px;height:32px"><svg width="32" height="32" viewBox="0 0 32 32"><circle cx="16" cy="16" r="16" fill="#00B8D9"/>
<ellipse cx="7.3" cy="16.2" rx="1.4" ry="1.8" fill="#FFEBE6"/><ellipse cx="24.7" cy="16.2" rx="1.4" ry="1.8" fill="#FFEBE6"/>
<rect x="8.2" y="11" width="15.6" height="9" fill="#FFEBE6"/>
<path d="M7.6 14.5 L10 14.5 L10.3 19.5 L21.7 19.5 L22 14.5 L24.4 14.5 L24.6 22 Q23.5 25 22 25.5 Q21.3 27.5 19.5 27.3 Q17.8 28.8 16 28.3 Q14.2 28.8 12.5 27.3 Q10.7 27.5 10 25.5 Q8.5 25 7.4 22 Z" fill="#FF8B00"/>
<path d="M8.8 10.5 Q9 3.8 16 3.8 Q23 3.8 23.2 10.5 Z" fill="#FF5630"/>
<rect x="7" y="10" width="18" height="2" rx="0.8" fill="#DE350B"/>
<circle cx="12.8" cy="16.8" r="0.95" fill="#344563"/><circle cx="19" cy="16.8" r="0.95" fill="#344563"/>
<ellipse cx="15.8" cy="22.2" rx="2.1" ry="1.4" fill="#344563"/>
</svg></div>
<div class="t" style="left:722px;top:517px;font-size:14px;line-height:14px;color:#0052CC;font-weight:400;letter-spacing:-0.05px;-webkit-text-stroke:0.35px #0052CC;">John Snow</div>
<div class="t" style="left:831px;top:493px;font-size:14px;line-height:14px;color:#172B4D;font-weight:400;letter-spacing:0px;">1/23/2024</div>
<div class="r" style="left:947px;top:484px;width:32px;height:32px"><svg width="32" height="32" viewBox="0 0 32 32"><circle cx="16" cy="16" r="16" fill="#00B8D9"/>
<path d="M7.1 12.3 L8.9 7.1 H22.6 L24.9 12.3 V20.9 L19.6 26.6 H12.4 L7.1 20.9 Z" fill="#FFAB00"/>
<path d="M5.6 8.6 Q5.8 6.9 7.6 6.9 L10.3 7.2 L10.3 12.6 L7.6 12.6 Q5.6 11.5 5.6 8.6 Z" fill="#FF8B00"/>
<path d="M26.2 8.4 Q26 6.6 24.2 6.6 L21.7 7 L21.7 11.8 L24.3 11.8 Q26.2 10.9 26.2 8.4 Z" fill="#FF8B00"/>
<path d="M13.1 7.1 H19.1 L18.3 11.7 L21.4 14.4 V23.1 L19.1 24.4 H12.9 L10.9 23.1 V14.4 L14 11.7 Z" fill="#FFFFFF"/>
<rect x="10.8" y="10.8" width="1.9" height="1.9" fill="#42526E"/><rect x="19.4" y="10.8" width="1.9" height="1.9" fill="#42526E"/>
<ellipse cx="16" cy="20.1" rx="2.6" ry="1.35" fill="#344563"/><rect x="15.6" y="21" width="0.8" height="2.8" fill="#97A0AF"/><path d="M14.4 23.6 H17.6 L17 24.9 H15 Z" fill="#344563"/>
</svg></div>
<div class="t" style="left:1002px;top:493px;font-size:14px;line-height:14px;color:#0052CC;font-weight:400;letter-spacing:0.1px;-webkit-text-stroke:0.35px #0052CC;">admin</div>
<div class="r" style="left:1134px;top:484px;width:32px;height:32px"><svg width="32" height="32" viewBox="0 0 32 32"><circle cx="16" cy="16" r="16" fill="#00B8D9"/>
<path d="M7.1 12.3 L8.9 7.1 H22.6 L24.9 12.3 V20.9 L19.6 26.6 H12.4 L7.1 20.9 Z" fill="#FFAB00"/>
<path d="M5.6 8.6 Q5.8 6.9 7.6 6.9 L10.3 7.2 L10.3 12.6 L7.6 12.6 Q5.6 11.5 5.6 8.6 Z" fill="#FF8B00"/>
<path d="M26.2 8.4 Q26 6.6 24.2 6.6 L21.7 7 L21.7 11.8 L24.3 11.8 Q26.2 10.9 26.2 8.4 Z" fill="#FF8B00"/>
<path d="M13.1 7.1 H19.1 L18.3 11.7 L21.4 14.4 V23.1 L19.1 24.4 H12.9 L10.9 23.1 V14.4 L14 11.7 Z" fill="#FFFFFF"/>
<rect x="10.8" y="10.8" width="1.9" height="1.9" fill="#42526E"/><rect x="19.4" y="10.8" width="1.9" height="1.9" fill="#42526E"/>
<ellipse cx="16" cy="20.1" rx="2.6" ry="1.35" fill="#344563"/><rect x="15.6" y="21" width="0.8" height="2.8" fill="#97A0AF"/><path d="M14.4 23.6 H17.6 L17 24.9 H15 Z" fill="#344563"/>
</svg></div>
<div class="t" style="left:1188px;top:493px;font-size:14px;line-height:14px;color:#0052CC;font-weight:400;letter-spacing:0.1px;-webkit-text-stroke:0.35px #0052CC;">admin</div>
<div class="t" style="left:1312.5px;top:493px;font-size:14px;line-height:14px;color:#172B4D;font-weight:400;letter-spacing:0px;">2/01/2024</div>
<div class="r" style="left:1421px;top:492px;width:18px;height:16px;background:#0052CC;border-radius:8px;"></div>
<div class="t" style="left:1421px;top:494.5px;font-size:12px;line-height:12px;color:#FFFFFF;font-weight:400;letter-spacing:-0.3px;-webkit-text-stroke:0.25px #FFFFFF;"><span style="display:inline-block;width:18px;text-align:center">0</span></div>
<svg class="r" style="left:1512px;top:492px" width="17" height="17" viewBox="0 0 17 17"><path d="M1 2.8 Q1 2.2 1.6 2.2 H5.3 V1.4 Q5.3 0.6 6.1 0.6 H10.9 Q11.7 0.6 11.7 1.4 V2.2 H15.4 Q16 2.2 16 2.8 V3.4 H1 Z" fill="#42526E"/><path d="M1.8 4.6 H15.2 L13.6 16 H3.4 Z" fill="#42526E"/></svg>
<svg class="r" style="left:1548px;top:490px" width="8" height="20" viewBox="0 0 8 20"><circle cx="4" cy="3" r="2" fill="#42526E"/><circle cx="4" cy="10" r="2" fill="#42526E"/><circle cx="4" cy="17" r="2" fill="#42526E"/></svg>
<svg class="r" style="left:21px;top:577px" width="17" height="17" viewBox="0 0 17 17"><g transform="translate(0.5,0.5)"><path d="M8 0.9 L10.2 5.4 L15.1 6.1 L11.5 9.5 L12.4 14.4 L8 12.1 L3.6 14.4 L4.5 9.5 L0.9 6.1 L5.8 5.4 Z" fill="#FFAB00" stroke="#FFAB00" stroke-width="2" stroke-linejoin="round"/></g></svg>
<div class="t" style="left:113.5px;top:565px;font-size:14px;line-height:14px;color:#0052CC;font-weight:400;letter-spacing:0px;-webkit-text-stroke:0.35px #0052CC;">kanban</div>
<div class="t" style="left:111px;top:603px;font-size:10.5px;line-height:10.5px;color:#6B778C;font-weight:400;letter-spacing:-0.1px;">kanban</div>
<div class="r" style="left:353px;top:576px;width:52px;height:20px;background:#F4F5F7;border-radius:3px;"></div>
<div class="t" style="left:357.5px;top:578px;font-size:14px;line-height:14px;color:#172B4D;font-weight:400;letter-spacing:-0.3px;">kanban</div>
<div class="t" style="left:473.5px;top:580px;font-size:13.5px;line-height:13.5px;color:#172B4D;font-weight:400;letter-spacing:-0.9px;">GLOBAL</div>
<div class="r" style="left:598px;top:579px;width:46px;height:16px;background:#DFE1E6;border-radius:3px;"></div>
<div class="t" style="left:601.5px;top:582px;font-size:11px;line-height:11px;color:#42526E;font-weight:700;letter-spacing:0.3px;">OW...</div>
<div class="r" style="left:668px;top:570px;width:32px;height:32px"><svg width="32" height="32" viewBox="0 0 32 32"><circle cx="16" cy="16" r="16" fill="#00B8D9"/>
<path d="M7.1 12.3 L8.9 7.1 H22.6 L24.9 12.3 V20.9 L19.6 26.6 H12.4 L7.1 20.9 Z" fill="#FFAB00"/>
<path d="M5.6 8.6 Q5.8 6.9 7.6 6.9 L10.3 7.2 L10.3 12.6 L7.6 12.6 Q5.6 11.5 5.6 8.6 Z" fill="#FF8B00"/>
<path d="M26.2 8.4 Q26 6.6 24.2 6.6 L21.7 7 L21.7 11.8 L24.3 11.8 Q26.2 10.9 26.2 8.4 Z" fill="#FF8B00"/>
<path d="M13.1 7.1 H19.1 L18.3 11.7 L21.4 14.4 V23.1 L19.1 24.4 H12.9 L10.9 23.1 V14.4 L14 11.7 Z" fill="#FFFFFF"/>
<rect x="10.8" y="10.8" width="1.9" height="1.9" fill="#42526E"/><rect x="19.4" y="10.8" width="1.9" height="1.9" fill="#42526E"/>
<ellipse cx="16" cy="20.1" rx="2.6" ry="1.35" fill="#344563"/><rect x="15.6" y="21" width="0.8" height="2.8" fill="#97A0AF"/><path d="M14.4 23.6 H17.6 L17 24.9 H15 Z" fill="#344563"/>
</svg></div>
<div class="t" style="left:722px;top:579px;font-size:14px;line-height:14px;color:#0052CC;font-weight:400;letter-spacing:-0.05px;-webkit-text-stroke:0.35px #0052CC;">admin</div>
<div class="t" style="left:831px;top:579px;font-size:14px;line-height:14px;color:#172B4D;font-weight:400;letter-spacing:0px;">1/23/2024</div>
<div class="r" style="left:947px;top:570px;width:32px;height:32px"><svg width="32" height="32" viewBox="0 0 32 32"><circle cx="16" cy="16" r="16" fill="#00B8D9"/>
<path d="M7.1 12.3 L8.9 7.1 H22.6 L24.9 12.3 V20.9 L19.6 26.6 H12.4 L7.1 20.9 Z" fill="#FFAB00"/>
<path d="M5.6 8.6 Q5.8 6.9 7.6 6.9 L10.3 7.2 L10.3 12.6 L7.6 12.6 Q5.6 11.5 5.6 8.6 Z" fill="#FF8B00"/>
<path d="M26.2 8.4 Q26 6.6 24.2 6.6 L21.7 7 L21.7 11.8 L24.3 11.8 Q26.2 10.9 26.2 8.4 Z" fill="#FF8B00"/>
<path d="M13.1 7.1 H19.1 L18.3 11.7 L21.4 14.4 V23.1 L19.1 24.4 H12.9 L10.9 23.1 V14.4 L14 11.7 Z" fill="#FFFFFF"/>
<rect x="10.8" y="10.8" width="1.9" height="1.9" fill="#42526E"/><rect x="19.4" y="10.8" width="1.9" height="1.9" fill="#42526E"/>
<ellipse cx="16" cy="20.1" rx="2.6" ry="1.35" fill="#344563"/><rect x="15.6" y="21" width="0.8" height="2.8" fill="#97A0AF"/><path d="M14.4 23.6 H17.6 L17 24.9 H15 Z" fill="#344563"/>
</svg></div>
<div class="t" style="left:1002px;top:579px;font-size:14px;line-height:14px;color:#0052CC;font-weight:400;letter-spacing:0.1px;-webkit-text-stroke:0.35px #0052CC;">admin</div>
<div class="r" style="left:1134px;top:570px;width:32px;height:32px"><svg width="32" height="32" viewBox="0 0 32 32"><circle cx="16" cy="16" r="16" fill="#00B8D9"/>
<path d="M7.1 12.3 L8.9 7.1 H22.6 L24.9 12.3 V20.9 L19.6 26.6 H12.4 L7.1 20.9 Z" fill="#FFAB00"/>
<path d="M5.6 8.6 Q5.8 6.9 7.6 6.9 L10.3 7.2 L10.3 12.6 L7.6 12.6 Q5.6 11.5 5.6 8.6 Z" fill="#FF8B00"/>
<path d="M26.2 8.4 Q26 6.6 24.2 6.6 L21.7 7 L21.7 11.8 L24.3 11.8 Q26.2 10.9 26.2 8.4 Z" fill="#FF8B00"/>
<path d="M13.1 7.1 H19.1 L18.3 11.7 L21.4 14.4 V23.1 L19.1 24.4 H12.9 L10.9 23.1 V14.4 L14 11.7 Z" fill="#FFFFFF"/>
<rect x="10.8" y="10.8" width="1.9" height="1.9" fill="#42526E"/><rect x="19.4" y="10.8" width="1.9" height="1.9" fill="#42526E"/>
<ellipse cx="16" cy="20.1" rx="2.6" ry="1.35" fill="#344563"/><rect x="15.6" y="21" width="0.8" height="2.8" fill="#97A0AF"/><path d="M14.4 23.6 H17.6 L17 24.9 H15 Z" fill="#344563"/>
</svg></div>
<div class="t" style="left:1188px;top:579px;font-size:14px;line-height:14px;color:#0052CC;font-weight:400;letter-spacing:0.1px;-webkit-text-stroke:0.35px #0052CC;">admin</div>
<div class="t" style="left:1312.5px;top:579px;font-size:14px;line-height:14px;color:#172B4D;font-weight:400;letter-spacing:0px;">1/23/2024</div>
<div class="r" style="left:1421px;top:578px;width:18px;height:16px;background:#0052CC;border-radius:8px;"></div>
<div class="t" style="left:1421px;top:580.5px;font-size:12px;line-height:12px;color:#FFFFFF;font-weight:400;letter-spacing:-0.3px;-webkit-text-stroke:0.25px #FFFFFF;"><span style="display:inline-block;width:18px;text-align:center">7</span></div>
<svg class="r" style="left:1512px;top:578px" width="17" height="17" viewBox="0 0 17 17"><path d="M1 2.8 Q1 2.2 1.6 2.2 H5.3 V1.4 Q5.3 0.6 6.1 0.6 H10.9 Q11.7 0.6 11.7 1.4 V2.2 H15.4 Q16 2.2 16 2.8 V3.4 H1 Z" fill="#42526E"/><path d="M1.8 4.6 H15.2 L13.6 16 H3.4 Z" fill="#42526E"/></svg>
<svg class="r" style="left:1548px;top:576px" width="8" height="20" viewBox="0 0 8 20"><circle cx="4" cy="3" r="2" fill="#42526E"/><circle cx="4" cy="10" r="2" fill="#42526E"/><circle cx="4" cy="17" r="2" fill="#42526E"/></svg>
</body></html>
